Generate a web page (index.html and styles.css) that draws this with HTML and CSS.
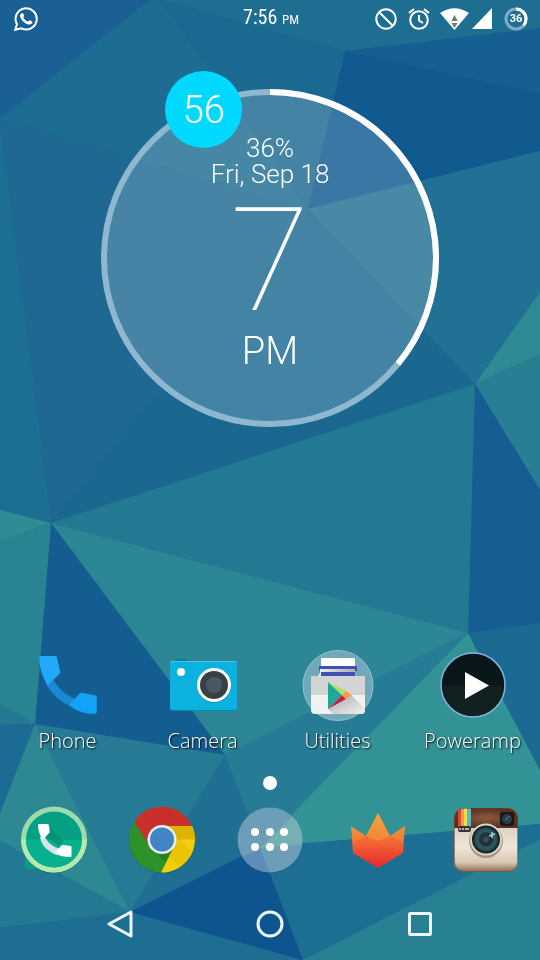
FILE: index.html
```html
<!DOCTYPE html>
<html lang="en">
<head>
  <meta charset="UTF-8" />
  <meta name="viewport" content="width=device-width, initial-scale=1.0"/>
  <title>Home</title>
  <link rel="stylesheet" href="styles.css">
</head>
<body>
  <svg class="wallpaper" viewBox="0 0 540 960" preserveAspectRatio="none" aria-hidden="true">
    <rect width="540" height="960" fill="#1b6890"/>
    <polygon fill="#1a6094" points="0,0 150,0 0,118"/>
    <polygon fill="#1d6d92" points="150,0 160,0 210,70 308,209 130,157 0,119"/>
    <polygon fill="#1b6890" points="160,0 345,51 308,209 210,70"/>
    <polygon fill="#1f6892" points="0,119 130,157 308,209 51,523"/>
    <polygon fill="#1d6e93" points="0,119 51,523 0,510"/>
    <polygon fill="#1a6890" points="308,209 475,384 51,523"/>
    <polygon fill="#1d6e91" points="160,0 540,0 540,28 345,51"/>
    <polygon fill="#165f92" points="345,51 540,28 540,93"/>
    <polygon fill="#115a90" points="345,51 540,93 540,151 308,209"/>
    <polygon fill="#207193" points="308,209 540,151 540,292 475,384"/>
    <polygon fill="#2e8a94" points="475,384 540,292 540,354"/>
    <polygon fill="#287e92" points="475,384 540,354 540,490"/>
    <polygon fill="#155d92" points="475,384 540,490 540,623 468,633"/>
    <polygon fill="#237892" points="51,523 475,384 468,633"/>
    <polygon fill="#2c8695" points="51,523 468,633 225,755"/>
    <polygon fill="#145d91" points="51,523 225,755 35,724"/>
    <polygon fill="#2f8c94" points="0,510 51,523 0,542"/>
    <polygon fill="#2a8393" points="0,542 51,523 35,724 0,704"/>
    <polygon fill="#237892" points="0,704 35,724 0,725"/>
    <polygon fill="#1c6b92" points="0,725 35,724 0,813"/>
    <polygon fill="#2e8893" points="35,724 130,912 0,841 0,813"/>
    <polygon fill="#267a94" points="35,724 225,755 130,912"/>
    <polygon fill="#237892" points="0,841 130,912 0,928"/>
    <polygon fill="#1e6e93" points="0,928 130,912 303,960 0,960"/>
    <polygon fill="#1f6f93" points="225,755 260,847 130,912"/>
    <polygon fill="#0e5590" points="130,912 260,847 303,960"/>
    <polygon fill="#267c95" points="225,755 468,633 260,847"/>
    <polygon fill="#339295" points="468,633 540,770 540,824 260,847"/>
    <polygon fill="#1c6992" points="468,633 540,623 540,770"/>
    <polygon fill="#1d6e93" points="260,847 540,824 540,839 303,960"/>
    <polygon fill="#288093" points="540,839 540,960 303,960"/>
  </svg>

  <div class="screen">
    <header class="status">
      <div class="status-left">
        <svg width="24" height="24" viewBox="0 0 24 24" role="img" aria-label="WhatsApp">
          <path d="M1.2 22.8 3 17.2A10.6 10.6 0 1 1 7.3 21.3Z" fill="none" stroke="#fff" stroke-width="2"/>
          <path d="M7.2 6.600c.8-.9 1.600-.8 2 0l.9 2c.2.8-.8 1.400-.8 1.900 1 2 2.500 3.300 4.600 4.100.7 0 1.200-1.400 1.900-1.300l2.200 1.100c.8.5.5 1.700-.5 2.400-1.700 1.200-4 .6-6.500-.9-2.500-1.600-4.600-4.300-4.900-6.300-.1-1.200.4-2.300 1.100-3z" fill="#fff"/>
        </svg>
      </div>
      <div class="time">7:56 <small>PM</small></div>
      <div class="status-right">
        <svg width="22" height="22" viewBox="0 0 22 22" role="img" aria-label="Blocked">
          <circle cx="11" cy="11" r="9.700" fill="none" stroke="#fff" stroke-width="2"/>
          <path d="M4.500 4.500 17.500 17.500" stroke="#fff" stroke-width="2"/>
        </svg>
        <svg class="alarm" width="22" height="22" viewBox="0 0 22 22" role="img" aria-label="Alarm">
          <g fill="none" stroke="#fff" stroke-width="2">
            <circle cx="11" cy="12" r="8.800"/>
            <path d="M1 5 6 1M21 5 16 1M11 7v5.500l4 2.500"/>
          </g>
        </svg>
        <svg class="wifi" width="29" height="22" viewBox="0 0 29 22" role="img" aria-label="Wi-Fi">
          <path d="M0 5Q14.500-4.500 29 5L14.500 22Z" fill="#fff"/>
          <path d="m14.500 7 3.200 6h-6.400zM11.300 15h6.400l-3.200 5z" fill="#777"/>
        </svg>
        <svg width="20" height="21" viewBox="0 0 20 21" role="img" aria-label="Signal">
          <path d="M20 0v21H0z" fill="#fff"/>
        </svg>
        <div class="battery">
          <svg viewBox="0 0 24 24" aria-hidden="true">
            <circle cx="12" cy="12" r="10" fill="none" stroke="#7fabc8" stroke-width="3"/>
            <circle cx="12" cy="12" r="10" fill="none" stroke="#fff" stroke-width="3" pathLength="100" stroke-dasharray="36 64" transform="rotate(-90 12 12)"/>
          </svg>
          <span>36</span>
        </div>
      </div>
    </header>

    <section class="clock">
      <svg class="dial" viewBox="0 0 338 338" aria-hidden="true">
        <circle cx="169" cy="169" r="164" fill="#fff" fill-opacity=".18"/>
        <circle cx="169" cy="169" r="166" fill="none" stroke="#8fb8d0" stroke-width="6"/>
        <circle cx="169" cy="169" r="166" fill="none" stroke="#fff" stroke-width="6" pathLength="100" stroke-dasharray="36 64" transform="rotate(-90 169 169)"/>
      </svg>
      <div class="minutes">56</div>
      <div class="clock-text">
        <div class="info">36%<br>Fri, Sep 18</div>
        <div class="hour">7</div>
        <div class="ampm">PM</div>
      </div>
    </section>

    <main class="apps">
      <button class="app" type="button">
        <svg width="72" height="72" viewBox="0 0 72 72" aria-hidden="true">
          <path d="M21 30c5 9 12 16 23 20l-6 7C28 53 20 45 14 35z" fill="#168ad2"/>
          <path d="M7.500 7H23q2 0 2 2l3.300 14q0 1-1 2L15.700 36.500C10 27 7 17 7.500 7z" fill="#23a9fb"/>
          <path d="M37 56 47.500 44.500q1-1 2.500-.8l14.700 3V63q0 2-2 2C53 65 44 62 37 56z" fill="#12a3f8"/>
        </svg>
        <span>Phone</span>
      </button>
      <button class="app" type="button">
        <svg width="72" height="72" viewBox="0 0 72 72" aria-hidden="true">
          <rect x="8" y="10" width="11" height="5" rx="1" fill="#087f9f"/>
          <rect x="3" y="13" width="67" height="49" rx="3" fill="#078cae"/>
          <rect x="3" y="12" width="67" height="49" rx="3" fill="#0bb1df"/>
          <path d="M3 14.500q0-2.500 2.500-2.500h62q2.500 0 2.500 2.500v.5q0-2-2.500-2h-62Q3 13 3 15z" fill="#43c7e9"/>
          <circle cx="14" cy="23" r="4" fill="#fff"/>
          <circle cx="47" cy="37" r="17" fill="#087d9c" opacity=".5"/>
          <circle cx="47" cy="36" r="17" fill="#fff"/>
          <circle cx="47" cy="36" r="14" fill="#3a3f43"/>
          <circle cx="47" cy="36" r="8" fill="#455a64"/>
        </svg>
        <span>Camera</span>
      </button>
      <button class="app" type="button">
        <svg width="72" height="72" viewBox="0 0 72 72" aria-hidden="true">
          <defs>
            <linearGradient id="band" x1="0" x2="1">
              <stop offset="0" stop-color="#eee"/><stop offset="1" stop-color="#aaa"/>
            </linearGradient>
            <linearGradient id="fold" x1="0" x2="1" y1="0" y2="1">
              <stop offset="0" stop-color="#a9a9a9"/><stop offset="1" stop-color="#f2f2f2"/>
            </linearGradient>
          </defs>
          <circle cx="36" cy="36.500" r="35" fill="#70a9b9" stroke="#99c2cf"/>
          <rect x="19" y="9" width="34" height="9" rx="1" fill="#fff"/>
          <path d="M17 17h38v5H17z" fill="#3f51b5"/>
          <path d="M18 20h35v4l2 3H16l2-3z" fill="url(#band)"/>
          <path d="M19 23h34v5H19z" fill="#3f51b5"/>
          <path d="M9 27h54v34q0 4-4 4H13q-4 0-4-4z" fill="#f1f1f1"/>
          <path d="M9 27h54v19H9z" fill="#d4d4d4"/>
          <path d="M26 60 49 46 63 60v1q0 4-4 4H31z" fill="url(#fold)"/>
          <path d="M26 33v27l14-14z" fill="#1da899"/>
          <path d="M26 33 44 42l-4 4z" fill="#a8e36a"/>
          <path d="M26 60 44 50l-4-4z" fill="#bd2448"/>
          <path d="M44 42 50 46 44 50 40 46z" fill="#f99b4a"/>
        </svg>
        <span>Utilities</span>
      </button>
      <button class="app" type="button">
        <svg width="72" height="72" viewBox="0 0 72 72" aria-hidden="true">
          <circle cx="36" cy="36" r="32" fill="#09171b" stroke="#83b4df" stroke-width="1.500"/>
          <path d="M6 37a30 30 0 0 0 60 0z" fill="#10211f"/>
          <path d="M28 23v27l24-13.500z" fill="#fff"/>
        </svg>
        <span>Poweramp</span>
      </button>
    </main>

    <div class="pager"><span></span></div>

    <footer class="dock">
      <button type="button" aria-label="Dialer">
        <svg width="72" height="72" viewBox="0 0 72 72" aria-hidden="true">
          <path d="M7 50v15h15z" fill="#0b9b83"/>
          <circle cx="36" cy="36.500" r="33" fill="#164e5a" opacity=".3"/>
          <circle cx="36" cy="35.500" r="33" fill="#9edbac"/>
          <path d="M3 35.500a33 33 0 0 0 66 0z" fill="#b1ebaf"/>
          <circle cx="36" cy="35.500" r="28" fill="#05a084"/>
          <path d="M8 35.500a28 28 0 0 0 56 0z" fill="#07b18e"/>
          <path d="M32 24 46 38 40 42 28 32z" fill="#078669" opacity=".6"/>
          <path d="M26 31c3 7 8 12 17 14l-4 6C30 48 23 41 22 33z" fill="#d7e3e8"/>
          <path d="M21 20h8.500q1 0 1.200 1l1 6q0 1.500-1 2.500l-6 6C21.500 31 20 26 20 21q0-1 1-1z" fill="#fff"/>
          <path d="M37 49.500 43 42q1-1 2.500-1l7 1q1 0 1 1v9q0 1-1 1-9 0-15.500-3.500z" fill="#fff"/>
        </svg>
      </button>
      <button type="button" aria-label="Chrome">
        <svg width="72" height="72" viewBox="0 0 72 72" aria-hidden="true">
          <circle cx="36" cy="36.500" r="33" fill="#164e5a" opacity=".4"/>
          <circle cx="36" cy="35.500" r="33" fill="#2f9129"/>
          <path d="M66 22A33 33 0 0 0 8.500 17.500L24 43 36 22z" fill="#c9302c"/>
          <path d="M35 68.500A33 33 0 0 0 66 22H36l12 21z" fill="#f4cf08"/>
          <path d="M36 22h30q3 6 3 13.500H48z" fill="#dfb400"/>
          <path d="m45 27 21 21q-4 9-12 15L38 48z" fill="#d9b100" opacity=".35"/>
          <path d="m24 43 12 6 10-2-7 11z" fill="#18711f" opacity=".5"/>
          <circle cx="36" cy="35.500" r="14.500" fill="#e6eef3"/>
          <circle cx="36" cy="35.500" r="12" fill="#4285c4"/>
        </svg>
      </button>
      <button type="button" aria-label="All apps">
        <svg width="72" height="72" viewBox="0 0 72 72" aria-hidden="true">
          <defs>
            <clipPath id="drawer"><circle cx="36" cy="36" r="32.500"/></clipPath>
          </defs>
          <circle cx="36" cy="37" r="32.500" fill="#154b63" opacity=".4"/>
          <g clip-path="url(#drawer)">
            <rect width="72" height="72" fill="#6c9fb7"/>
            <path d="M0 58 26 44 37 72H0z" fill="#5d8db8"/>
            <path d="M26 44 72 40V0z" fill="#77b0b3"/>
          </g>
          <g fill="#fff">
            <circle cx="21" cy="28" r="4"/><circle cx="36" cy="28" r="4"/><circle cx="50" cy="28" r="4"/>
            <circle cx="21" cy="43" r="4"/><circle cx="36" cy="43" r="4"/><circle cx="50" cy="43" r="4"/>
          </g>
        </svg>
      </button>
      <button type="button" aria-label="Launcher">
        <svg width="72" height="72" viewBox="0 0 72 72" aria-hidden="true">
          <defs>
            <linearGradient id="crown" x1="0" x2="0" y1="0" y2="1">
              <stop offset="0" stop-color="#eba13d"/><stop offset=".5" stop-color="#f36b36"/><stop offset="1" stop-color="#e7262d"/>
            </linearGradient>
          </defs>
          <path d="m9 22 15 10L36 9l12 23 15-10-2 27-25 15L11 49z" fill="url(#crown)"/>
          <path d="M24 32 36 9l12 23-12 5z" fill="#f6a33c" opacity=".5"/>
          <path d="m9 22 15 10-13 6zM63 22 48 32l13 6z" fill="#f09a3c" opacity=".4"/>
        </svg>
      </button>
      <button type="button" aria-label="Instagram">
        <svg width="72" height="72" viewBox="0 0 72 72" aria-hidden="true">
          <defs>
            <clipPath id="insta"><rect x="4" y="4" width="64" height="64" rx="10"/></clipPath>
            <linearGradient id="cream" x1="0" x2="0" y1="0" y2="1">
              <stop offset="0" stop-color="#cdbba5"/><stop offset=".6" stop-color="#efe6da"/><stop offset=".85" stop-color="#d8c8b3"/><stop offset="1" stop-color="#8a6b4d"/>
            </linearGradient>
            <radialGradient id="leather">
              <stop offset="0" stop-color="#8f5a3e"/><stop offset="1" stop-color="#57301e"/>
            </radialGradient>
            <radialGradient id="glass">
              <stop offset="0" stop-color="#5b4c62"/><stop offset=".35" stop-color="#172d34"/><stop offset=".7" stop-color="#2c5c60"/><stop offset="1" stop-color="#0b1418"/>
            </radialGradient>
          </defs>
          <g clip-path="url(#insta)">
            <rect x="4" y="4" width="64" height="64" fill="url(#cream)"/>
            <rect x="4" y="4" width="64" height="20" fill="url(#leather)"/>
            <path d="M8 4h3v19H8z" fill="#d94843"/>
            <path d="M11 4h3v19h-3z" fill="#ed9f3d"/>
            <path d="M14 4h3v19h-3z" fill="#f3dc4b"/>
            <path d="M17 4h4v19h-4z" fill="#5dbac1"/>
          </g>
          <rect x="4.500" y="4.500" width="63" height="63" rx="10" fill="none" stroke="#65452f" stroke-opacity=".6"/>
          <rect x="8" y="22" width="13" height="6" rx="2" fill="#393330"/>
          <path d="M10 24v2m3-2v2m3-2v2m2-2v2" stroke="#ddd" stroke-width="1.500"/>
          <rect x="50" y="8" width="14" height="14" rx="3" fill="#18181a"/>
          <circle cx="57" cy="15" r="5" fill="#273d49"/>
          <path d="m55 16 5-4" stroke="#6a8290"/>
          <circle cx="36" cy="37" r="17" fill="#6b5038" opacity=".5"/>
          <circle cx="36" cy="35.500" r="16" fill="#ddd4ca"/>
          <circle cx="36" cy="35.500" r="14" fill="url(#glass)"/>
          <circle cx="36" cy="35.500" r="8" fill="none" stroke="#487177" stroke-opacity=".5"/>
          <path d="m39 32 6-2m-3-2v6" stroke="#a8d5cf" stroke-width="1.500"/>
        </svg>
      </button>
    </footer>

    <nav class="navbar">
      <button type="button" aria-label="Back">
        <svg width="28" height="30" viewBox="0 0 28 30" aria-hidden="true">
          <path d="M25 3v24L3 15z"/>
        </svg>
      </button>
      <button type="button" aria-label="Home">
        <svg width="28" height="28" viewBox="0 0 28 28" aria-hidden="true">
          <circle cx="14" cy="14" r="12"/>
        </svg>
      </button>
      <button type="button" aria-label="Recent apps">
        <svg width="26" height="26" viewBox="0 0 26 26" aria-hidden="true">
          <rect x="2.500" y="2.500" width="21" height="21" rx="1"/>
        </svg>
      </button>
    </nav>
  </div>
</body>
</html>
```

FILE: styles.css
```css
* {
  box-sizing: border-box;
}
body {
  margin: 0;
  font-family: Roboto, sans-serif;
  color: #fff;
  background: #1b6890;
}
svg {
  display: block;
}
button {
  padding: 0;
  border: 0;
  background: none;
  color: inherit;
  cursor: pointer;
}
.wallpaper {
  position: fixed;
  inset: 0;
  width: 100%;
  height: 100%;
}
.screen {
  position: relative;
  display: flex;
  flex-direction: column;
  min-height: 100vh;
}

/* status bar */
.status {
  display: grid;
  grid-template-columns: 1fr auto 1fr;
  align-items: center;
  height: 37px;
  padding: 0 12px 0 14px;
}
.time {
  font-family: "Roboto Condensed", Roboto, sans-serif;
  font-size: 20px;
  line-height: 24px;
}
.time small {
  font-size: 13px;
}
.status-right {
  display: flex;
  justify-content: flex-end;
  align-items: center;
}
.status-right .alarm {
  margin: 0 10px 0 11px;
}
.status-right .wifi {
  margin-right: 3px;
}
.battery {
  display: grid;
  place-items: center;
  width: 24px;
  height: 24px;
  margin-left: 12px;
  font-size: 11px;
  font-weight: 700;
}
.battery > * {
  grid-area: 1 / 1;
}
.battery svg {
  width: 24px;
}

/* clock widget */
.clock {
  position: relative;
  width: 338px;
  max-width: 100%;
  margin: 52px auto 24px;
  display: grid;
  font-weight: 300;
  text-align: center;
}
.dial, .clock-text {
  grid-area: 1 / 1;
}
.dial {
  width: 100%;
}
.clock-text {
  position: relative;
  padding-top: 46px;
}
.minutes {
  position: absolute;
  z-index: 1;
  left: 64px;
  top: -18px;
  width: 77px;
  height: 77px;
  border-radius: 50%;
  background: #00d9ff;
  font-size: 38px;
  line-height: 78px;
}
.info {
  font-size: 26px;
  line-height: 26px;
}
.hour {
  font-size: 145px;
  font-weight: 100;
  line-height: 146px;
}
.ampm {
  font-size: 38px;
  line-height: 36px;
}

/* home screen apps */
.apps {
  display: grid;
  grid-template-columns: repeat(4, 1fr);
  margin-top: auto;
}
.app {
  display: flex;
  flex-direction: column;
  align-items: center;
  gap: 7px;
  font-family: "Open Sans", sans-serif;
  font-size: 20px;
  font-weight: 300;
  line-height: 26px;
  text-shadow: 1px 1px 2px #000;
}
.pager {
  display: flex;
  justify-content: center;
  padding: 22px 0 2px;
}
.pager span {
  width: 14px;
  height: 14px;
  border-radius: 50%;
  background: #fff;
}
.dock {
  display: grid;
  grid-template-columns: repeat(5, 1fr);
  justify-items: center;
  padding: 12px 0;
}

/* navigation bar */
.navbar {
  display: grid;
  grid-template-columns: repeat(3, 1fr);
  justify-items: center;
  align-items: center;
  height: 72px;
  padding: 0 45px;
}
.navbar svg {
  fill: none;
  stroke: #eef8ff;
  stroke-width: 3;
  stroke-linejoin: round;
}
```
